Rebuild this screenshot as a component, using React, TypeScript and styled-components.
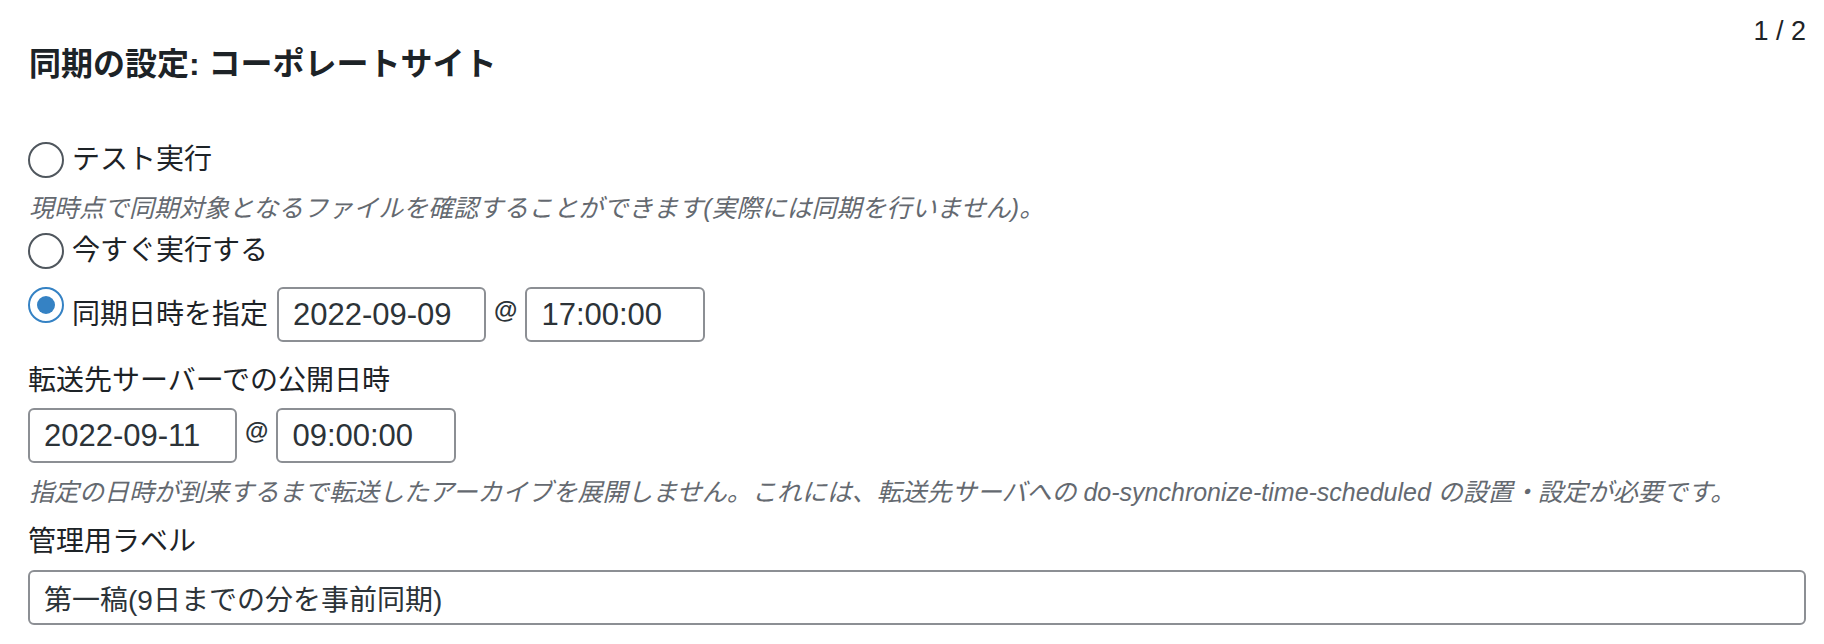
import styled, { createGlobalStyle } from "styled-components";

const FONT = `"Liberation Sans", "Noto Sans CJK JP", sans-serif`;

const GlobalStyle = createGlobalStyle`
  body {
    margin: 0;
    background: #fff;
  }
`;

const Page = styled.div`
  padding: 0 18px 0 28px;
  font-family: ${FONT};
  font-size: 28px;
  color: #1d2327;
`;

const Header = styled.header`
  display: flex;
  justify-content: space-between;
  align-items: flex-start;
`;

const Title = styled.h2`
  margin: 44px 0 0 1px;
  font-size: 32px;
  line-height: 40px;
  font-weight: 700;
`;

const Pager = styled.div`
  margin-top: 14px;
  font-size: 27px;
  line-height: 34px;
`;

const Options = styled.div`
  margin-top: 56px;
  display: flex;
  flex-direction: column;
`;

const OptionRow = styled.label<{ $gap?: number }>`
  display: flex;
  align-items: center;
  min-height: 40px;
  margin-top: ${(p) => p.$gap ?? 0}px;
  line-height: 40px;
`;

const Radio = styled.span<{ $checked?: boolean; $top?: boolean }>`
  box-sizing: border-box;
  flex-shrink: 0;
  width: 36px;
  height: 36px;
  margin-right: 8px;
  align-self: ${(p) => (p.$top ? "flex-start" : "center")};
  border-radius: 50%;
  border: 2px solid ${(p) => (p.$checked ? "#3582c4" : "#50575e")};
  display: flex;
  align-items: center;
  justify-content: center;

  &::after {
    content: "";
    display: ${(p) => (p.$checked ? "block" : "none")};
    width: 18px;
    height: 18px;
    border-radius: 50%;
    background: #3582c4;
  }
`;

const OptionText = styled.span`
  margin-right: 9px;
`;

const Hint = styled.p<{ $gap?: number }>`
  margin: ${(p) => p.$gap ?? 0}px 0 0 1px;
  font-size: 25px;
  line-height: 36px;
  font-style: italic;
  color: #646970;
`;

const FieldLabel = styled.div<{ $gap: number }>`
  margin-top: ${(p) => p.$gap}px;
  line-height: 36px;
`;

const DateTime = styled.div<{ $gap?: number }>`
  display: flex;
  align-items: center;
  margin-top: ${(p) => p.$gap ?? 0}px;
`;

const At = styled.span`
  align-self: flex-start;
  margin: 11px 8px 0;
  font-size: 24px;
  line-height: 24px;
  font-weight: 700;
  color: #2c3338;
`;

const Field = styled.input<{ $width?: number }>`
  box-sizing: border-box;
  width: ${(p) => (p.$width ? `${p.$width}px` : "100%")};
  height: 55px;
  margin: 0;
  padding: 0 14px;
  border: 2px solid #8c8f94;
  border-radius: 6px;
  background: #fff;
  font-family: ${FONT};
  font-size: ${(p) => (p.$width ? 31 : 28)}px;
  color: #2c3338;
  outline: none;
`;

type StampProps = {
  date: string;
  time: string;
};

const Stamp = ({ date, time }: StampProps): JSX.Element => (
  <>
    <Field $width={209} value={date} readOnly />
    <At>@</At>
    <Field $width={180} value={time} readOnly />
  </>
);

const App = (): JSX.Element => {
  return (
    <Page>
      <GlobalStyle />
      <Header>
        <Title>同期の設定: コーポレートサイト</Title>
        <Pager>1 / 2</Pager>
      </Header>

      <Options>
        <OptionRow>
          <Radio />
          <OptionText>テスト実行</OptionText>
        </OptionRow>
        <Hint $gap={10}>
          現時点で同期対象となるファイルを確認することができます(実際には同期を行いません)。
        </Hint>
        <OptionRow $gap={5}>
          <Radio />
          <OptionText>今すぐ実行する</OptionText>
        </OptionRow>
        <OptionRow $gap={16}>
          <Radio $checked $top />
          <OptionText>同期日時を指定</OptionText>
          <Stamp date="2022-09-09" time="17:00:00" />
        </OptionRow>
      </Options>

      <FieldLabel $gap={21}>転送先サーバーでの公開日時</FieldLabel>
      <DateTime $gap={9}>
        <Stamp date="2022-09-11" time="09:00:00" />
      </DateTime>
      <Hint $gap={11}>
        指定の日時が到来するまで転送したアーカイブを展開しません。これには、転送先サーバへの
        do-synchronize-time-scheduled の設置・設定が必要です。
      </Hint>

      <FieldLabel $gap={14}>管理用ラベル</FieldLabel>
      <DateTime $gap={10}>
        <Field value="第一稿(9日までの分を事前同期)" readOnly />
      </DateTime>
    </Page>
  );
};

export default App;
